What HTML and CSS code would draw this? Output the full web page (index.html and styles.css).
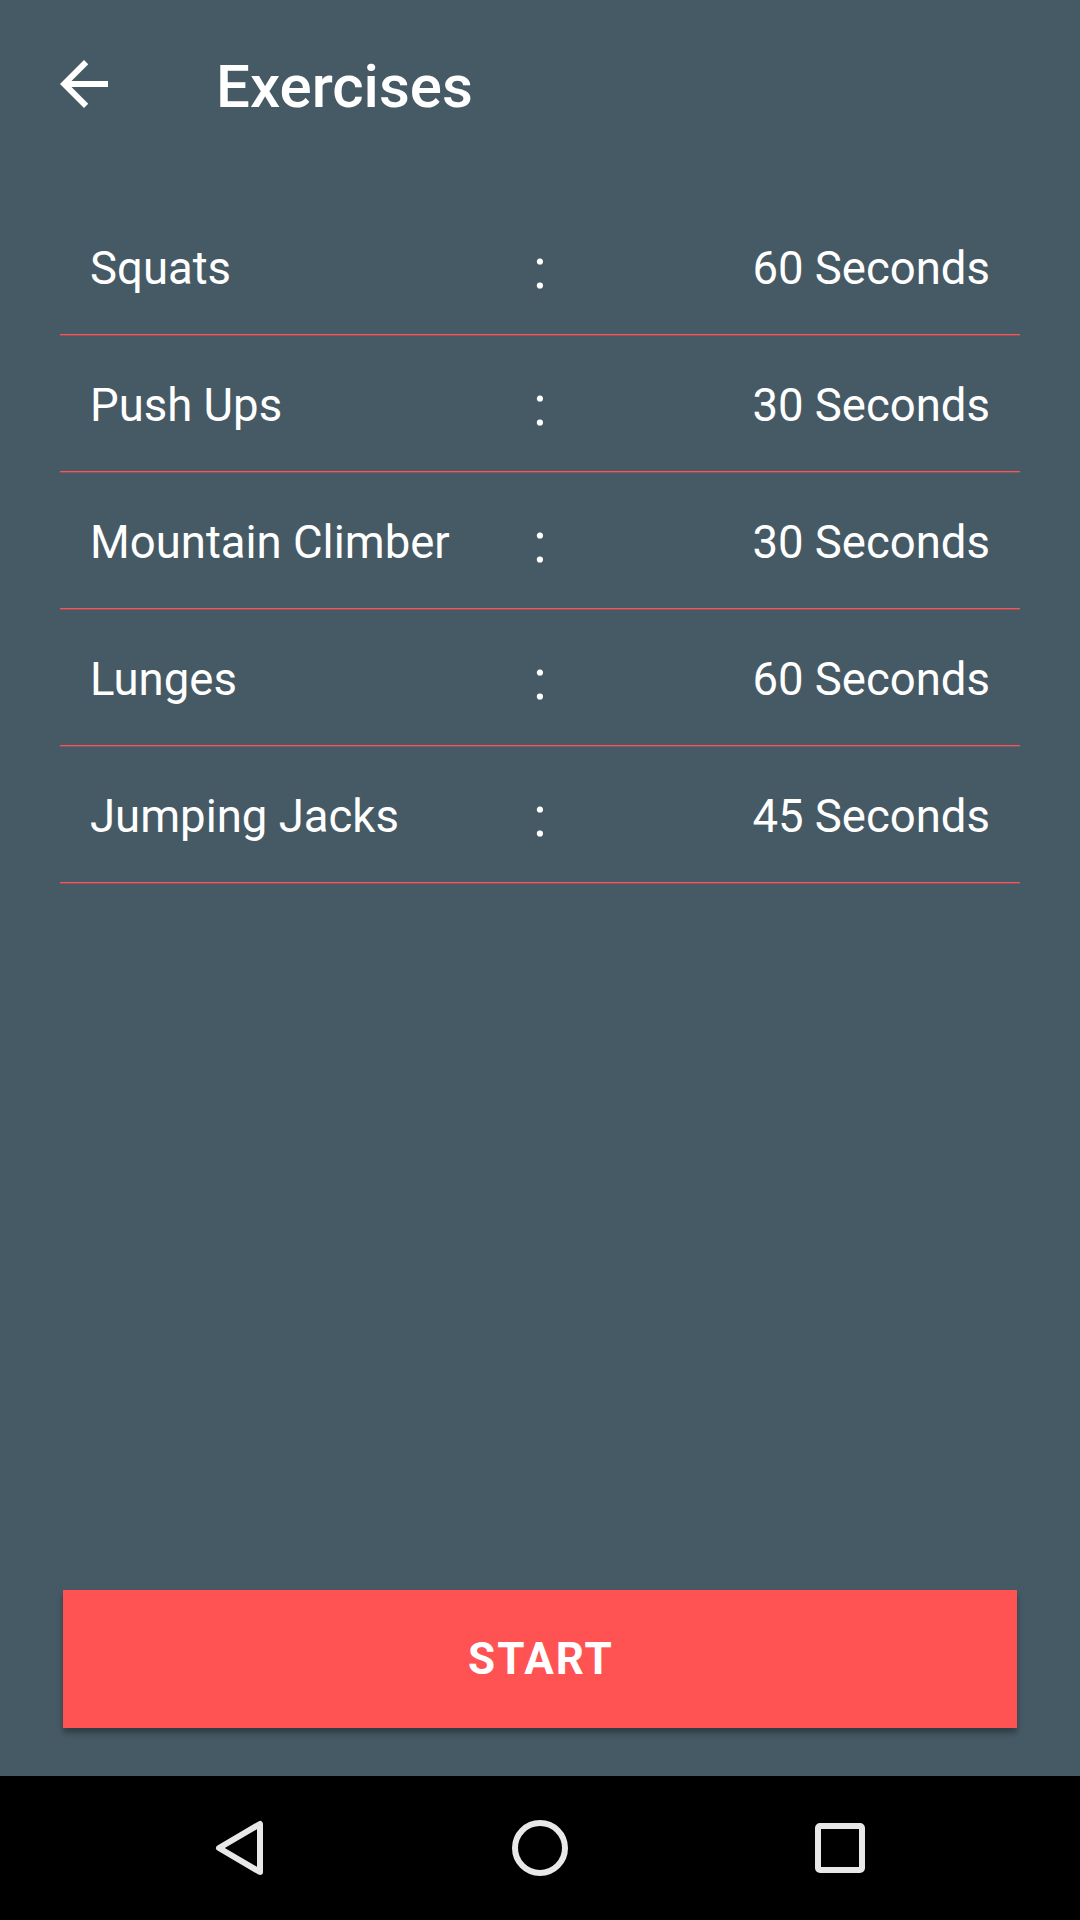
FILE: index.html
```html
<!DOCTYPE html>
<html lang="en">
<head>
<meta charset="utf-8">
<title>Exercises</title>
<link rel="stylesheet" href="styles.css">
</head>
<body>
<div class="screen">
  <header class="toolbar">
    <svg class="back" viewBox="0 0 24 24" width="72" height="72" aria-hidden="true">
      <path d="M20 11H7.83l5.59-5.59L12 4l-8 8 8 8 1.41-1.41L7.83 13H20v-2z" fill="#ffffff"/>
    </svg>
    <h1 class="title">Exercises</h1>
  </header>

  <ul class="list">
    <li class="row"><span class="name">Squats</span><span class="colon">:</span><span class="dur">60 Seconds</span></li>
    <li class="row"><span class="name">Push Ups</span><span class="colon">:</span><span class="dur">30 Seconds</span></li>
    <li class="row"><span class="name">Mountain Climber</span><span class="colon">:</span><span class="dur">30 Seconds</span></li>
    <li class="row"><span class="name">Lunges</span><span class="colon">:</span><span class="dur">60 Seconds</span></li>
    <li class="row"><span class="name">Jumping Jacks</span><span class="colon">:</span><span class="dur">45 Seconds</span></li>
  </ul>

  <button class="start" type="button">START</button>

  <nav class="navbar">
    <div class="nav-btn">
      <svg viewBox="0 0 72 72" width="72" height="72" aria-hidden="true">
        <path d="M56 12 L56 60 L15 36 Z" fill="none" stroke="#e8e8e8" stroke-width="6" stroke-linejoin="round"/>
      </svg>
    </div>
    <div class="nav-btn">
      <svg viewBox="0 0 72 72" width="72" height="72" aria-hidden="true">
        <circle cx="36" cy="36" r="25" fill="none" stroke="#e8e8e8" stroke-width="6"/>
      </svg>
    </div>
    <div class="nav-btn">
      <svg viewBox="0 0 72 72" width="72" height="72" aria-hidden="true">
        <rect x="14" y="14" width="44" height="44" rx="2" fill="none" stroke="#e8e8e8" stroke-width="6"/>
      </svg>
    </div>
  </nav>
</div>
</body>
</html>
```

FILE: styles.css
```css
* {
  box-sizing: border-box;
}

html, body {
  margin: 0;
  padding: 0;
}

body {
  width: 1080px;
  height: 1920px;
  background: #465a65;
  font-family: Roboto, "Liberation Sans", sans-serif;
  color: #ffffff;
  overflow: hidden;
}

.screen {
  width: 1080px;
  height: 1920px;
  display: flex;
  flex-direction: column;
}

.toolbar {
  height: 168px;
  flex: 0 0 168px;
  display: flex;
  align-items: center;
  padding-left: 48px;
}

.back {
  display: block;
  flex: 0 0 72px;
}

.title {
  margin: 0 0 0 96px;
  padding-top: 5px;
  font-size: 60px;
  font-weight: 500;
  line-height: normal;
  color: #ffffff;
}

.list {
  list-style: none;
  margin: 30px 60px 0;
  padding: 0;
}

.row {
  height: 137px;
  padding: 5px 30px 0;
  border-bottom: 1px solid #ff5252;
  box-shadow: 0 1px 0 rgba(255, 82, 82, 0.35);
  display: grid;
  grid-template-columns: 1fr auto 1fr;
  align-items: center;
  font-size: 45.5px;
  line-height: normal;
}

.name {
  justify-self: start;
  white-space: nowrap;
}

.colon {
  justify-self: center;
  font-size: 55px;
}

.dur {
  justify-self: end;
  white-space: nowrap;
}

.start {
  margin: auto 63px 48px;
  height: 138px;
  flex: 0 0 138px;
  border: none;
  border-radius: 0;
  background: #ff5252;
  color: #ffffff;
  font-family: Roboto, "Liberation Sans", sans-serif;
  font-weight: 700;
  font-size: 44px;
  letter-spacing: 2px;
  text-indent: 2px;
  box-shadow: 0 5px 6px rgba(0, 0, 0, 0.32);
  padding: 0;
}

.navbar {
  height: 144px;
  flex: 0 0 144px;
  background: #000000;
  display: flex;
  justify-content: center;
}

.nav-btn {
  width: 300px;
  display: flex;
  align-items: center;
  justify-content: center;
}

.nav-btn svg {
  display: block;
}
```
